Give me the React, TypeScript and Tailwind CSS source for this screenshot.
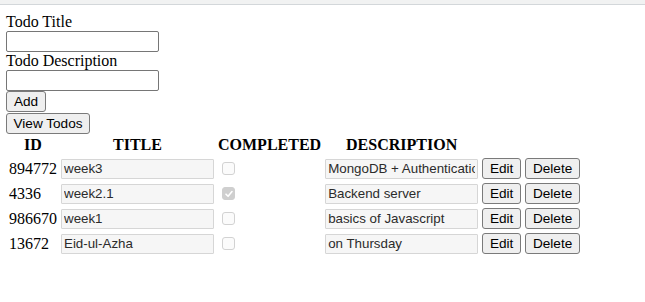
import React from "react";

const todos = [
  { id: "894772", title: "week3", completed: false, description: "MongoDB + Authentication" },
  { id: "4336", title: "week2.1", completed: true, description: "Backend server" },
  { id: "986670", title: "week1", completed: false, description: "basics of Javascript" },
  { id: "13672", title: "Eid-ul-Azha", completed: false, description: "on Thursday" },
];

const serif = { fontFamily: '"Liberation Serif", "Times New Roman", serif' } as const;

function Btn({ label, w }: { label: string; w: string }) {
  return (
    <button
      className={`block h-[21px] ${w} bg-[#efefef] border border-[#7a7a7a] rounded-[3px] text-[13.6px] leading-[15px] text-black text-center font-['Liberation_Sans',Arial,sans-serif] p-0`}
    >
      {label}
    </button>
  );
}

function CheckBox({ checked }: { checked: boolean }) {
  return (
    <div
      className={`ml-[4px] w-[13px] h-[13px] rounded-[3px] border flex items-center justify-center ${
        checked ? "bg-[#cfcfcf] border-[#cfcfcf]" : "bg-[#fbfbfb] border-[#d2d2d2]"
      }`}
    >
      {checked && (
        <svg width="10" height="10" viewBox="0 0 10 10">
          <path d="M2 5.2 L4.1 7.3 L8 2.6" stroke="#ffffff" strokeWidth="1.6" fill="none" strokeLinecap="round" strokeLinejoin="round" />
        </svg>
      )}
    </div>
  );
}

function RowInput({ value }: { value: string }) {
  return (
    <input
      readOnly
      value={value}
      className="block w-[153px] h-[20px] border border-[#d6d6d6] rounded-[1px] bg-[#f6f6f6] px-[2px] py-0 text-[13.33px] leading-[18px] text-[#2b2b2b] font-['Liberation_Sans',Arial,sans-serif] outline-none"
    />
  );
}

export default function App() {
  return (
    <div className="w-[645px] h-[302px] bg-white text-black overflow-hidden" style={serif}>
      <div className="h-[4px] bg-[#f1f2f2] border-b border-[#d3d7da] box-content" />
      <div className="pl-[6px] pt-[8px] text-[16px]">
        <div className="leading-[18px]">Todo Title</div>
        <div className="w-[153px] h-[21px] border border-[#767676] rounded-[2px] bg-white" />
        <div className="leading-[18px]">Todo Description</div>
        <div className="w-[153px] h-[21px] border border-[#767676] rounded-[2px] bg-white" />
        <div>
          <Btn label="Add" w="w-[40px]" />
        </div>
        <div className="mt-[1px]">
          <Btn label="View Todos" w="w-[84px]" />
        </div>
        <table className="border-separate border-spacing-[2px] -mt-[1px]">
          <thead>
            <tr>
              <th className="p-[1px] font-bold text-center leading-[18px]">ID</th>
              <th className="p-[1px] font-bold text-center leading-[18px]">TITLE</th>
              <th className="p-[1px] font-bold text-center leading-[18px]">COMPLETED</th>
              <th className="p-[1px] font-bold text-center leading-[18px]">DESCRIPTION</th>
            </tr>
          </thead>
          <tbody>
            {todos.map((t) => (
              <tr key={t.id}>
                <td className="p-[1px] align-middle text-left leading-[18px]">{t.id}</td>
                <td className="p-[1px] align-middle">
                  <RowInput value={t.title} />
                </td>
                <td className="p-[1px] align-middle">
                  <CheckBox checked={t.completed} />
                </td>
                <td className="p-[1px] align-middle">
                  <RowInput value={t.description} />
                </td>
                <td className="p-[1px] align-middle h-[23px]">
                  <Btn label="Edit" w="w-[39px]" />
                </td>
                <td className="p-[1px] align-middle">
                  <Btn label="Delete" w="w-[55px]" />
                </td>
              </tr>
            ))}
          </tbody>
        </table>
      </div>
    </div>
  );
}
